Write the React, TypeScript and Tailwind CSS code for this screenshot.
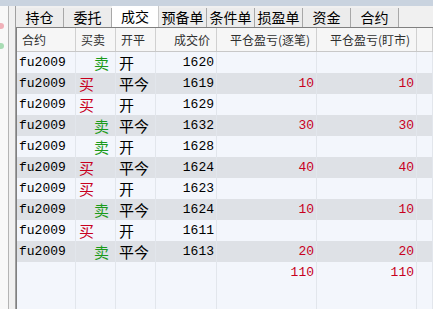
import React from 'react';

interface Trade {
  code: string;
  side: '买' | '卖';
  offset: string;
  price: string;
  pnl: string;
  pnlMkt: string;
}

const tabs = ['持仓', '委托', '成交', '预备单', '条件单', '损盈单', '资金', '合约'];

const trades: Trade[] = [
  { code: 'fu2009', side: '卖', offset: '开', price: '1620', pnl: '', pnlMkt: '' },
  { code: 'fu2009', side: '买', offset: '平今', price: '1619', pnl: '10', pnlMkt: '10' },
  { code: 'fu2009', side: '买', offset: '开', price: '1629', pnl: '', pnlMkt: '' },
  { code: 'fu2009', side: '卖', offset: '平今', price: '1632', pnl: '30', pnlMkt: '30' },
  { code: 'fu2009', side: '卖', offset: '开', price: '1628', pnl: '', pnlMkt: '' },
  { code: 'fu2009', side: '买', offset: '平今', price: '1624', pnl: '40', pnlMkt: '40' },
  { code: 'fu2009', side: '买', offset: '开', price: '1623', pnl: '', pnlMkt: '' },
  { code: 'fu2009', side: '卖', offset: '平今', price: '1624', pnl: '10', pnlMkt: '10' },
  { code: 'fu2009', side: '买', offset: '开', price: '1611', pnl: '', pnlMkt: '' },
  { code: 'fu2009', side: '卖', offset: '平今', price: '1613', pnl: '20', pnlMkt: '20' },
];

const cols = 'grid grid-cols-[59px_40px_40px_61px_100px_100px_1fr]';
const mono = "font-['Liberation_Mono','Noto_Sans_CJK_SC',monospace] text-[13px]";
const cjk = "font-['Noto_Sans_CJK_SC',sans-serif] text-[15px] leading-none";
const cell = 'border-r border-[#e2e6ec] flex items-center overflow-hidden whitespace-nowrap';

const Row: React.FC<{ trade?: Trade; total?: boolean; shaded: boolean }> = ({ trade, total, shaded }) => (
  <div className={`${cols} h-[21px] ${shaded ? 'bg-[#dee1e6]' : 'bg-[#f3f6fc]'}`}>
    <div className={`${cell} pl-[2px] ${mono} text-black`}>{trade?.code}</div>
    <div className={`${cell} ${cjk} ${trade?.side === '卖' ? 'justify-end pr-[6px] text-[#1a9a1a]' : 'pl-[3px] text-[#c8001e]'}`}>
      {trade?.side}
    </div>
    <div className={`${cell} pl-[3px] ${cjk} text-black`}>{trade?.offset}</div>
    <div className={`${cell} justify-end pr-[2px] ${mono} text-black`}>{trade?.price}</div>
    <div className={`${cell} justify-end pr-[2px] ${mono} text-[#c8001e]`}>{total ? '110' : trade?.pnl}</div>
    <div className={`${cell} justify-end pr-[2px] ${mono} text-[#c8001e]`}>{total ? '110' : trade?.pnlMkt}</div>
    <div className={cell}></div>
  </div>
);

export default function App() {
  return (
    <div className="w-[433px] h-[309px] overflow-hidden bg-[#f0f0f0] flex flex-col font-['Noto_Sans_CJK_SC',sans-serif]">
      <div className="h-[6px] bg-[#c9d3df]" />
      <div className="flex flex-1 min-h-0">
        {/* edge of the neighbouring panel, only its last pixels show */}
        <div className="w-[9px] bg-[#f8f8f8] border-r border-[#b4b4b4] flex flex-col items-start pt-[17px] gap-[14px]">
          <div className="w-[4px] h-[6px] rounded-r-sm bg-[#f0b0b8]" />
          <div className="w-[4px] h-[6px] rounded-r-sm bg-[#a8dcb4]" />
        </div>
        <div className="w-[7px] border-r border-[#a0a0a0]" />
        <div className="flex-1 flex flex-col min-w-0">
          <div className="h-[25px] flex items-end">
            {tabs.map((t, i) =>
              i === 2 ? (
                <div key={t} className="w-[47px] h-[21px] bg-white flex items-center justify-center text-[14px] text-black border-r border-[#c8c8c8]">
                  {t}
                </div>
              ) : (
                <div key={t} className="w-[48px] h-[19px] bg-[#ececec] flex items-center justify-center text-[14px] text-black border-r border-[#a8a8a8]">
                  {t}
                </div>
              ),
            )}
          </div>
          <div className="flex-1 flex flex-col border-t border-l border-[#808080] bg-[#f3f6fc]">
            <div className={`${cols} h-[24px] bg-[#f6f6f6] border-b border-[#c8c8c8] text-[12px] text-[#303030]`}>
              {['合约', '买卖', '开平', '成交价', '平仓盈亏(逐笔)', '平仓盈亏(盯市)', ''].map((h, i) => (
                <div
                  key={i}
                  className={`border-r border-[#d0d0d0] flex items-center whitespace-nowrap overflow-hidden ${i >= 3 ? 'justify-end pr-[6px]' : 'pl-[5px]'}`}
                >
                  {h}
                </div>
              ))}
            </div>
            {trades.map((t, i) => (
              <Row key={i} trade={t} shaded={i % 2 === 1} />
            ))}
            <Row total shaded={false} />
            <Row shaded={false} />
            <Row shaded={false} />
          </div>
        </div>
      </div>
    </div>
  );
}
